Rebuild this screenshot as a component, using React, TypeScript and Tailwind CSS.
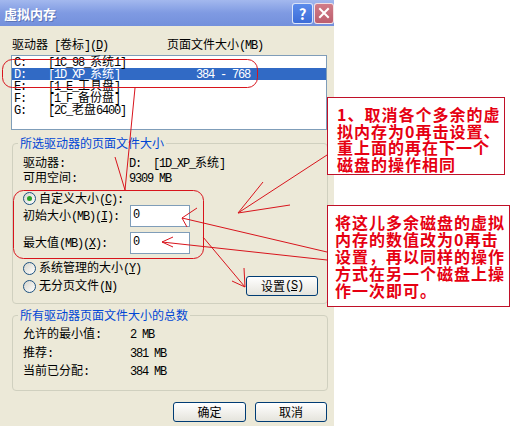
import React from 'react';

const mono = "font-['Liberation_Mono'] tracking-[-1.2px] whitespace-pre";

// splits a label into latin / CJK runs; "&X" underlines the mnemonic letter
const T: React.FC<{ s: string }> = ({ s }) => (
  <>
    {s
      .split(/([\x20-\x7E]+)/)
      .filter(Boolean)
      .map((p, i) => {
        if (!/^[\x20-\x7E]+$/.test(p)) return <span key={i}>{p}</span>;
        const k = p.indexOf('&');
        if (k < 0)
          return (
            <span key={i} className={mono}>
              {p}
            </span>
          );
        return (
          <span key={i} className={mono}>
            {p.slice(0, k)}
            <u>{p[k + 1]}</u>
            {p.slice(k + 2)}
          </span>
        );
      })}
  </>
);

const Radio: React.FC<{ checked?: boolean }> = ({ checked }) => (
  <span className="flex h-[13px] w-[13px] shrink-0 items-center justify-center rounded-full border border-[#1C5180] bg-linear-to-br from-[#D6D5CC] to-white">
    {checked && <span className="h-[5px] w-[5px] rounded-full bg-[#2BA12B]" />}
  </span>
);

const XpButton: React.FC<{ className: string; children: React.ReactNode }> = ({ className, children }) => (
  <div
    className={`flex items-center justify-center rounded-[3px] border border-[#003C74] bg-linear-to-b from-white to-[#E5E4DC] ${className}`}
  >
    {children}
  </div>
);

const drives = [
  { d: 'C:', label: '[1C_98_系统1]', size: '', sel: false },
  { d: 'D:', label: '[1D_XP_系统]', size: '384 - 768', sel: true },
  { d: 'E:', label: '[1_E_工具盘]', size: '', sel: false },
  { d: 'F:', label: '[1_F_备份盘]', size: '', sel: false },
  { d: 'G:', label: '[2C_老盘6400]', size: '', sel: false },
];

const totals = [
  { k: '允许的最小值:', v: '2 MB', mt: 'mt-[6px]' },
  { k: '推荐:', v: '381 MB', mt: 'mt-[7px]' },
  { k: '当前已分配:', v: '384 MB', mt: 'mt-[6px]' },
];

export default function App() {
  return (
    <div className="relative h-[426px] w-[512px] overflow-hidden bg-white font-['Noto_Sans_CJK_SC',sans-serif] text-[12px] leading-[12px] text-black">
      {/* dialog */}
      <div className="flex h-full w-[334px] flex-col bg-[#ECE9D8]">
        <div className="flex h-[26px] shrink-0 items-center bg-linear-to-b from-[#A3B8EE] via-[#7F9AE2] to-[#7390DC] pl-[4px]">
          <span className="flex-1 text-[13px] font-bold leading-[13px] text-white [text-shadow:1px_1px_#5C75B8]">虚拟内存</span>
          <div className="mr-[1px] flex h-[21px] w-[21px] items-center justify-center rounded-[3px] border border-white/80 bg-linear-to-b from-[#5B8BEB] to-[#3C6CD8] text-[15px] font-bold leading-[15px] text-white">
            ?
          </div>
          <div className="flex h-[21px] w-[20px] items-center justify-center rounded-[3px] border border-white/80 bg-linear-to-b from-[#D17C88] to-[#BC5E6E]">
            <svg width="12" height="12" viewBox="0 0 12 12">
              <path d="M2 2 L10 10 M10 2 L2 10" stroke="white" strokeWidth="2" strokeLinecap="square" />
            </svg>
          </div>
        </div>

        <div className="flex flex-1 flex-col pl-[11px] pr-[7px] pt-[12px]">
          <div className="flex h-[12px] pl-[1px]">
            <span className="w-[155px]">
              <T s="驱动器 [卷标](&D)" />
            </span>
            <span>
              <T s="页面文件大小(MB)" />
            </span>
          </div>

          <div className="mt-[5px] h-[75px] border border-[#7F9DB9] bg-white">
            {drives.map((r) => (
              <div
                key={r.d}
                className={`flex h-[12px] items-center pl-[2px] ${r.sel ? 'bg-[#316AC5] text-white' : ''}`}
              >
                <span className="w-[34px]">
                  <T s={r.d} />
                </span>
                <span className="w-[148px]">
                  <T s={r.label} />
                </span>
                <span>
                  <T s={r.size} />
                </span>
              </div>
            ))}
          </div>

          <fieldset className="ml-[1px] mr-[-1px] mt-[7px] h-[167px] rounded-[4px] border border-[#D0D0BF] p-0">
            <legend className="ml-[5px] px-[2px] text-[#0046D5]">所选驱动器的页面文件大小</legend>
            <div className="pl-[10px] pr-[9px]">
              <div className="mt-[7px] flex h-[12px]">
                <span className="w-[106px]">
                  <T s="驱动器:" />
                </span>
                <span>
                  <T s="D:  [1D_XP_系统]" />
                </span>
              </div>
              <div className="mt-[3px] flex h-[12px]">
                <span className="w-[106px]">
                  <T s="可用空间:" />
                </span>
                <span>
                  <T s="9309 MB" />
                </span>
              </div>
              <div className="mt-[9px] flex h-[13px] items-center">
                <Radio checked />
                <span className="ml-[3px]">
                  <T s="自定义大小(&C):" />
                </span>
              </div>
              <div className="flex h-[22px] items-center">
                <span className="w-[107px]">
                  <T s="初始大小(MB)(&I):" />
                </span>
                <div className="flex h-[22px] w-[60px] items-center border border-[#7F9DB9] bg-white pb-[3px] pl-[2px]">
                  <T s="0" />
                </div>
              </div>
              <div className="mt-[5px] flex h-[22px] items-center">
                <span className="w-[107px]">
                  <T s="最大值(MB)(&X):" />
                </span>
                <div className="flex h-[22px] w-[60px] items-center border border-[#7F9DB9] bg-white pb-[3px] pl-[2px]">
                  <T s="0" />
                </div>
              </div>
              <div className="flex">
                <div className="flex flex-col">
                  <div className="mt-[8px] flex h-[12px] items-center">
                    <Radio />
                    <span className="ml-[3px]">
                      <T s="系统管理的大小(&Y)" />
                    </span>
                  </div>
                  <div className="mt-[6px] flex h-[12px] items-center">
                    <Radio />
                    <span className="ml-[3px]">
                      <T s="无分页文件(&N)" />
                    </span>
                  </div>
                </div>
                <XpButton className="ml-auto mt-[22px] h-[20px] w-[72px]">
                  <T s="设置(&S)" />
                </XpButton>
              </div>
            </div>
          </fieldset>

          <fieldset className="ml-[1px] mr-[-1px] mt-[5px] h-[82px] rounded-[4px] border border-[#D0D0BF] p-0">
            <legend className="ml-[5px] px-[2px] text-[#0046D5]">所有驱动器页面文件大小的总数</legend>
            <div className="pl-[10px]">
              {totals.map((t) => (
                <div key={t.k} className={`flex h-[12px] ${t.mt}`}>
                  <span className="w-[107px]">
                    <T s={t.k} />
                  </span>
                  <span>
                    <T s={t.v} />
                  </span>
                </div>
              ))}
            </div>
          </fieldset>

          <div className="mt-[11px] flex justify-end gap-[9px]">
            <XpButton className="h-[20px] w-[73px]">确定</XpButton>
            <XpButton className="h-[20px] w-[72px]">取消</XpButton>
          </div>
        </div>
      </div>

      {/* red annotations */}
      <svg className="pointer-events-none absolute inset-0" width="512" height="426" viewBox="0 0 512 426">
        <g fill="none" stroke="#D8141C" strokeWidth="1">
          <rect x="2.5" y="59.5" width="255" height="28" rx="10" />
          <rect x="13.5" y="190.5" width="190" height="68" rx="10" />
          <path d="M135 88 L125 190 M115 157 L125 190" />
          <path d="M327 155 L238 213 M263 182 L238 213 M290 205 L238 213" />
          <path d="M327 252 L182 218 M197 208 L182 218 L187 227" />
          <path d="M327 260 L162 242 M173 237 L162 242 L173 247" />
          <path d="M203 237 L245 287 M244 268 L245 287 M232 281 L245 287" />
        </g>
      </svg>

      <div className="absolute left-[327px] top-[97px] h-[78px] w-[178px] whitespace-nowrap border border-[#C01028] bg-white pl-[9px] pt-[8px] text-[16px] font-bold leading-[16.5px] tracking-[1px] text-[#E60012]">
        <div>1、取消各个多余的虚</div>
        <div>拟内存为0再击设置、</div>
        <div>重上面的再在下一个</div>
        <div>磁盘的操作相同</div>
      </div>

      <div className="absolute left-[327px] top-[205px] h-[102px] w-[183px] whitespace-nowrap border border-[#C01028] bg-white pl-[7px] pt-[8px] text-[16px] font-bold leading-[17px] tracking-[1px] text-[#E60012]">
        <div>将这儿多余磁盘的虚拟</div>
        <div>内存的数值改为0再击</div>
        <div>设置，再以同样的操作</div>
        <div>方式在另一个磁盘上操</div>
        <div>作一次即可。</div>
      </div>
    </div>
  );
}
